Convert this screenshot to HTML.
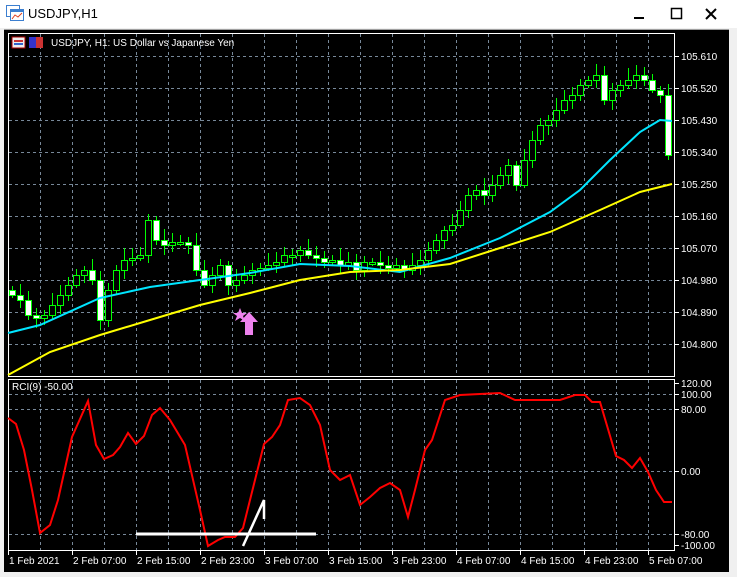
<!DOCTYPE html>
<html><head><meta charset="utf-8"><style>
body{margin:0;width:737px;height:577px;overflow:hidden;background:#f0f0f0;font-family:"Liberation Sans",sans-serif}
#tb{position:absolute;left:0;top:0;width:737px;height:28px;background:#fff}
#tb .t{position:absolute;left:28px;top:6px;font-size:13px;color:#000}
svg text{font-family:"Liberation Sans",sans-serif;font-size:10px;fill:#fff}
</style></head><body>
<div id="tb">
<svg width="20" height="18" style="position:absolute;left:6px;top:5px"><rect x="0.5" y="0.5" width="13" height="11" fill="#fff" stroke="#3c7fd0"/><rect x="4.5" y="4.5" width="13" height="11" fill="#fff" stroke="#3c7fd0"/><rect x="5" y="5" width="12" height="2" fill="#3c7fd0"/><polyline points="6,14 9,10 12,12 16,8" stroke="#e04020" fill="none"/></svg>
<span class="t">USDJPY,H1</span>
<svg width="110" height="20" style="position:absolute;left:630px;top:5px"><rect x="4" y="12" width="10" height="2" fill="#000"/><rect x="41.5" y="3.5" width="10" height="10" fill="none" stroke="#000" stroke-width="1.5"/><path d="M76 4 L86 14 M86 4 L76 14" stroke="#000" stroke-width="2"/></svg>
</div>
<svg id="s" width="737" height="548" style="position:absolute;left:0;top:29px"><g id="gg" transform="translate(0,-29)"></g></svg>
<script>
(function(){
var S='';
function L(s){S+=s;}
L('<rect x="4" y="29" width="725" height="1" fill="#a0a0a0"/>');
L('<rect x="4" y="30" width="725" height="542" fill="#000"/>');
L('<rect x="8.5" y="33.5" width="666" height="343" fill="none" stroke="#fff"/>');
L('<rect x="8.5" y="379.5" width="666" height="171" fill="none" stroke="#fff"/>');
var g='stroke="#778899" stroke-dasharray="3,3" stroke-width="1"';
for(var x=40;x<=670;x+=32){L('<line x1="'+(x+.5)+'" y1="34" x2="'+(x+.5)+'" y2="376" '+g+'/>');L('<line x1="'+(x+.5)+'" y1="380" x2="'+(x+.5)+'" y2="550" '+g+'/>');}
var pr=['105.610','105.520','105.430','105.340','105.250','105.160','105.070','104.980','104.890','104.800'];
for(var i=0;i<10;i++){var y=56+32*i;L('<line x1="9" y1="'+(y+.5)+'" x2="674" y2="'+(y+.5)+'" '+g+'/>');L('<line x1="675" y1="'+(y+.5)+'" x2="679" y2="'+(y+.5)+'" stroke="#fff"/>');L('<text x="681" y="'+(y+4)+'">'+pr[i]+'</text>');}
var rl=[[120,383],[100,394],[80,409],[0,471],[-80,534],[-100,545]];
rl.forEach(function(r){if(r[0]==80||r[0]==0||r[0]==-80||r[0]==100)L('<line x1="9" y1="'+(r[1]+.5)+'" x2="674" y2="'+(r[1]+.5)+'" '+g+'/>');L('<line x1="675" y1="'+(r[1]+.5)+'" x2="679" y2="'+(r[1]+.5)+'" stroke="#fff"/>');L('<text x="681" y="'+(r[1]+4)+'">'+(r[0]==0?'0.00':r[0]+'.00')+'</text>');});
var tl=['1 Feb 2021','2 Feb 07:00','2 Feb 15:00','2 Feb 23:00','3 Feb 07:00','3 Feb 15:00','3 Feb 23:00','4 Feb 07:00','4 Feb 15:00','4 Feb 23:00','5 Feb 07:00'];
for(var i=0;i<11;i++){var x=8+64*i;L('<line x1="'+(x+.5)+'" y1="551" x2="'+(x+.5)+'" y2="555" stroke="#fff"/>');L('<text x="'+(x+1)+'" y="564">'+tl[i]+'</text>');}
var c=[295,300,315,318,315,305,295,285,275,270,280,320,290,270,260,258,255,220,240,245,242,242,245,270,285,275,265,285,280,275,270,268,265,262,255,255,250,255,258,262,260,265,262,270,262,262,265,268,265,270,265,260,250,240,230,225,210,195,190,195,185,175,165,185,160,140,125,120,110,100,95,85,80,75,100,90,85,80,75,80,90,95,155];
var o=290;
for(var i=0;i<c.length;i++){var x=12+8*i,cl=c[i],tp=Math.min(o,cl),bt=Math.max(o,cl);var hi=tp-4-((i*7)%9),lo=bt+3+((i*5)%8);
L('<line x1="'+(x+.5)+'" y1="'+hi+'" x2="'+(x+.5)+'" y2="'+lo+'" stroke="#00ff00"/>');
var h=Math.max(bt-tp,2);L('<rect x="'+(x-2.5)+'" y="'+(tp+.5)+'" width="6" height="'+h+'" fill="'+(cl>o?'#fff':'#000')+'" stroke="#00ff00"/>');o=cl;}
L('<polyline points="8,333 40,325 100,298 150,287 200,280 250,273 300,264 350,266 400,272 450,258 500,238 550,212 580,190 610,160 640,132 660,120 672,121" fill="none" stroke="#00e5ff" stroke-width="2"/>');
L('<polyline points="8,375 50,352 100,335 150,320 200,305 250,293 300,280 350,272 400,270 450,264 500,248 550,232 600,210 640,192 672,184" fill="none" stroke="#ffff00" stroke-width="2"/>');
L('<polygon points="240,308 242,313 247,313 243,316 245,321 240,318 235,321 237,316 233,313 238,313" fill="#ee82ee"/>');
L('<polygon points="249,312 258,322 253,322 253,335 245,335 245,322 240,322" fill="#ee82ee"/>');
L('<text x="12" y="390">RCI(9) -50.00</text>');
L('<text x="51" y="46">USDJPY, H1:  US Dollar vs Japanese Yen</text>');
L('<rect x="12" y="37" width="13" height="11" fill="#eee" stroke="#a00"/><rect x="14" y="40" width="9" height="2" fill="#c33"/><rect x="14" y="43" width="9" height="2" fill="#36c"/><rect x="29" y="37" width="7" height="11" fill="#33c"/><rect x="36" y="37" width="7" height="11" fill="#c33"/>');
L('<polyline points="8,418 16,424 24,450 32,490 40,533 50,525 58,500 72,437 88,401 96,445 104,459 113,455 120,447 128,433 136,444 144,436 152,415 160,408 170,420 185,445 200,510 208,546 218,540 225,537 235,537 243,528 264,444 272,437 280,425 288,400 300,398 310,405 320,425 330,470 340,480 350,475 360,505 370,497 380,488 390,483 400,490 408,517 415,490 425,450 432,440 445,400 460,395 500,393 515,400 535,400 560,400 575,395 585,395 592,402 600,402 616,456 624,460 632,468 640,458 648,472 656,490 664,502 672,502" fill="none" stroke="#ff0000" stroke-width="2"/>');
L('<line x1="136" y1="534" x2="316" y2="534" stroke="#fff" stroke-width="3"/>');
L('<polyline points="243,546 264,500 264,519" fill="none" stroke="#fff" stroke-width="2.5"/>');
L('<line x1="551" y1="34" x2="553" y2="38" stroke="#888"/>');
document.getElementById('gg').innerHTML=S;
})();
</script>
</body></html>
